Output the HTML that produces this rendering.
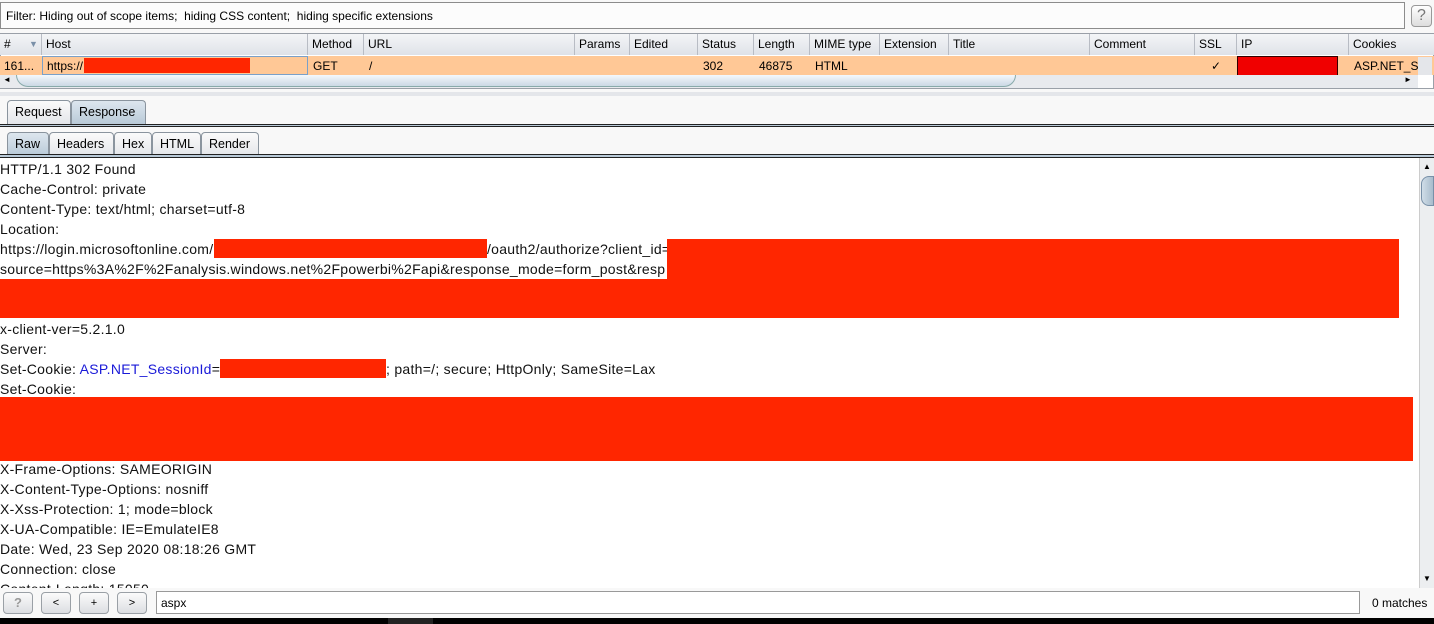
<!DOCTYPE html>
<html><head><style>
*{margin:0;padding:0;box-sizing:border-box}
body{width:1434px;height:624px;background:#f8f8f8;font-family:"Liberation Sans",sans-serif;font-size:12px;color:#000;position:relative;overflow:hidden}
.a{position:absolute}
.red{position:absolute;background:#ff2600}
.th{position:absolute;top:34px;height:21px;border-right:1px solid #b8bcc4;padding:3px 4px;background:linear-gradient(#f4f5f7,#dfe2e8)}
.td{position:absolute;top:57px;height:18px;padding:2px 4px}
.tab{position:absolute;height:24px;border:1px solid #8a949e;border-bottom:none;border-radius:4px 4px 0 0;background:linear-gradient(#fafafa,#e4e6ea);padding:4px 7px;font-size:12.5px}
.tab.sel{background:linear-gradient(#dde6ee,#b9cad8)}
.ln{position:absolute;left:0;font-size:14px;letter-spacing:0.28px;white-space:nowrap;color:#111}
.btn{position:absolute;top:592px;width:30px;height:22px;border:1px solid #9aa0a6;border-radius:4px;background:linear-gradient(#fbfbfb,#dcdee2);text-align:center;font-size:11px;line-height:20px}
</style></head><body>
<div class="a" style="left:0;top:2px;width:1405px;height:27px;border:1px solid #8c8c8c;background:#fcfcfc;padding:6px 5px;font-size:12px">Filter: Hiding out of scope items;&nbsp; hiding CSS content;&nbsp; hiding specific extensions</div>
<div class="a" style="left:1411px;top:5px;width:21px;height:22px;border:1px solid #999;border-radius:4px;background:linear-gradient(#fff,#ddd);text-align:center;font-size:16px;color:#777;line-height:20px">?</div>
<div class="a" style="left:0;top:33px;width:1434px;height:56px;border:1px solid #9aa0a8;background:#fff"></div>
<div class="th" style="left:0;width:42px">#<span style="position:absolute;left:29px;color:#7a90a8;font-size:9px;top:5px">▼</span></div>
<div class="th" style="left:42px;width:266px">Host</div>
<div class="th" style="left:308px;width:56px">Method</div>
<div class="th" style="left:364px;width:211px">URL</div>
<div class="th" style="left:575px;width:55px">Params</div>
<div class="th" style="left:630px;width:68px">Edited</div>
<div class="th" style="left:698px;width:56px">Status</div>
<div class="th" style="left:754px;width:56px">Length</div>
<div class="th" style="left:810px;width:70px">MIME type</div>
<div class="th" style="left:880px;width:69px">Extension</div>
<div class="th" style="left:949px;width:141px">Title</div>
<div class="th" style="left:1090px;width:105px">Comment</div>
<div class="th" style="left:1195px;width:42px">SSL</div>
<div class="th" style="left:1237px;width:112px">IP</div>
<div class="th" style="left:1349px;width:85px;border-right:none">Cookies</div>
<div class="a" style="left:0;top:56px;width:1434px;height:19px;background:#ffc896"></div>
<div class="a" style="left:42px;top:56px;width:266px;height:19px;border:1px solid #7aa0c8"></div>
<div class="td" style="left:0">161...</div>
<div class="td" style="left:43px">https://</div>
<div class="red" style="left:84px;top:58px;width:166px;height:15px"></div>
<div class="td" style="left:309px">GET</div>
<div class="td" style="left:365px">/</div>
<div class="td" style="left:699px">302</div>
<div class="td" style="left:755px">46875</div>
<div class="td" style="left:811px">HTML</div>
<div class="td" style="left:1207px">✓</div>
<div class="a" style="left:1237px;top:56px;width:101px;height:22px;background:#f00000;border:1px solid #300"></div>
<div class="td" style="left:1350px">ASP.NET_S</div>
<div class="a" style="left:1418px;top:57px;width:14px;height:18px;background:#e4e6ea"></div>
<div class="a" style="left:0;top:75px;width:1418px;height:13px;background:#e8eaee"></div>
<div class="a" style="left:16px;top:75px;width:1000px;height:12px;border:1px solid #8aa;border-top:none;border-radius:0 0 12px 12px;background:linear-gradient(#f4f8fc,#cbd8e4)"></div>
<div class="a" style="left:3px;top:75px;font-size:8px">◄</div>
<div class="a" style="left:1404px;top:75px;font-size:8px">►</div>
<div class="a" style="left:0;top:92px;width:1434px;height:4px;background:#e4e6ea"></div>
<div class="tab" style="left:7px;top:100px;width:64px">Request</div>
<div class="tab sel" style="left:71px;top:100px;width:75px">Response</div>
<div class="a" style="left:0;top:124px;width:1434px;height:3px;background:#b9cad8;border-top:1px solid #222;border-bottom:1px solid #222"></div>
<div class="tab sel" style="left:7px;top:132px;width:42px">Raw</div>
<div class="tab" style="left:49px;top:132px;width:65px">Headers</div>
<div class="tab" style="left:114px;top:132px;width:38px">Hex</div>
<div class="tab" style="left:152px;top:132px;width:49px">HTML</div>
<div class="tab" style="left:201px;top:132px;width:58px">Render</div>
<div class="a" style="left:0;top:154px;width:1434px;height:4px;background:#b9cad8;border-top:1px solid #222;border-bottom:1px solid #222"></div>
<div class="a" style="left:0;top:158px;width:1419px;height:430px;background:#fff"></div>
<div class="a" style="left:1419px;top:158px;width:15px;height:430px;background:#eceef0;border-left:1px solid #ccc"></div>
<div class="a" style="left:1421px;top:176px;width:13px;height:30px;border-radius:8px 0 0 8px;background:linear-gradient(90deg,#d0dde8,#a8bccc);border:1px solid #7890a8"></div>
<div class="a" style="left:1423px;top:162px;font-size:8px">▲</div>
<div class="a" style="left:1423px;top:574px;font-size:8px">▼</div>
<div class="ln" style="top:161px">HTTP/1.1 302 Found</div>
<div class="ln" style="top:181px">Cache-Control: private</div>
<div class="ln" style="top:201px">Content-Type: text/html; charset=utf-8</div>
<div class="ln" style="top:221px">Location:</div>
<div class="ln" style="top:241px">https://login.microsoftonline.com/</div>
<div class="ln" style="top:241px;left:487px">/oauth2/authorize?client_id=</div>
<div class="ln" style="top:261px">source=https%3A%2F%2Fanalysis.windows.net%2Fpowerbi%2Fapi&amp;response_mode=form_post&amp;resp</div>
<div class="red" style="left:214px;top:239px;width:273px;height:19px"></div>
<div class="red" style="left:667px;top:239px;width:732px;height:40px"></div>
<div class="red" style="left:0;top:279px;width:1399px;height:39px"></div>
<div class="ln" style="top:321px">x-client-ver=5.2.1.0</div>
<div class="ln" style="top:341px">Server:</div>
<div class="ln" style="top:361px">Set-Cookie: <span style="color:#1a1ad8">ASP.NET_SessionId</span>=</div>
<div class="ln" style="top:361px;left:386px">; path=/; secure; HttpOnly; SameSite=Lax</div>
<div class="red" style="left:220px;top:359px;width:166px;height:19px"></div>
<div class="ln" style="top:381px">Set-Cookie:</div>
<div class="red" style="left:0;top:397px;width:1413px;height:64px"></div>
<div class="ln" style="top:461px">X-Frame-Options: SAMEORIGIN</div>
<div class="ln" style="top:481px">X-Content-Type-Options: nosniff</div>
<div class="ln" style="top:501px">X-Xss-Protection: 1; mode=block</div>
<div class="ln" style="top:521px">X-UA-Compatible: IE=EmulateIE8</div>
<div class="ln" style="top:541px">Date: Wed, 23 Sep 2020 08:18:26 GMT</div>
<div class="ln" style="top:561px">Connection: close</div>
<div class="ln" style="top:581px;height:7px;overflow:hidden">Content-Length: 15050</div>
<div class="a" style="left:0;top:588px;width:1434px;height:30px;background:#f8f8f8"></div>
<div class="btn" style="left:3px;color:#999;font-size:13px;font-weight:bold">?</div>
<div class="btn" style="left:41px">&lt;</div>
<div class="btn" style="left:79px">+</div>
<div class="btn" style="left:117px">&gt;</div>
<div class="a" style="left:156px;top:591px;width:1204px;height:23px;border:1px solid #999;background:#fff;padding:4px 4px;font-size:12px">aspx</div>
<div class="a" style="left:1372px;top:596px;font-size:12px">0 matches</div>
<div class="a" style="left:0;top:618px;width:1434px;height:6px;background:#000"></div>
<div class="a" style="left:388px;top:618px;width:45px;height:6px;background:#222"></div>
</body></html>
